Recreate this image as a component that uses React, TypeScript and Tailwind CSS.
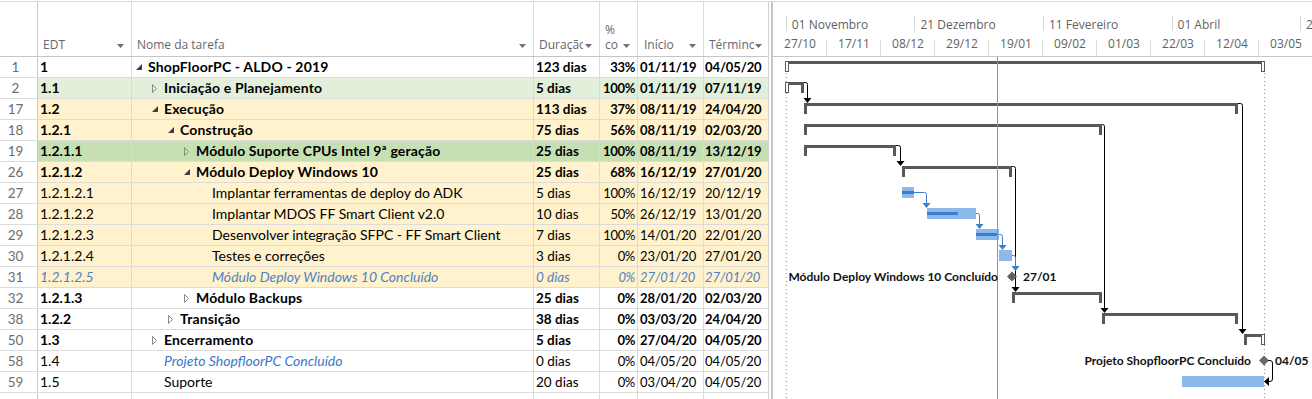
import React from 'react';

const BASE = Date.UTC(2019, 9, 27);
const PX_DAY = 54 / 21;

function dayOf(s: string) {
  const [d, m, y] = s.split('/').map(Number);
  return (Date.UTC(2000 + y, m - 1, d) - BASE) / 86400000;
}
const xs = (s: string) => dayOf(s) * PX_DAY;
const xe = (s: string) => (dayOf(s) + 1) * PX_DAY;
const top = (i: number) => i * 21;

type Kind = 'sum' | 'task' | 'ms';

interface Row {
  n: number;
  edt: string;
  name: string;
  level: number;
  exp?: 'open' | 'closed';
  dur: string;
  pct: string;
  start: string;
  end: string;
  bg: string;
  bold?: boolean;
  italic?: 'all' | 'name';
  kind: Kind;
  progress?: number;
}

const WHITE = 'bg-white';
const LIGHT_GREEN = 'bg-[#e2efda]';
const GREEN = 'bg-[#c6e0b4]';
const YELLOW = 'bg-[#fff2cc]';

const rows: Row[] = [
  { n: 1, edt: '1', name: 'ShopFloorPC - ALDO - 2019', level: 1, exp: 'open', dur: '123 dias', pct: '33%', start: '01/11/19', end: '04/05/20', bg: WHITE, bold: true, kind: 'sum' },
  { n: 2, edt: '1.1', name: 'Iniciação e Planejamento', level: 2, exp: 'closed', dur: '5 dias', pct: '100%', start: '01/11/19', end: '07/11/19', bg: LIGHT_GREEN, bold: true, kind: 'sum' },
  { n: 17, edt: '1.2', name: 'Execução', level: 2, exp: 'open', dur: '113 dias', pct: '37%', start: '08/11/19', end: '24/04/20', bg: YELLOW, bold: true, kind: 'sum' },
  { n: 18, edt: '1.2.1', name: 'Construção', level: 3, exp: 'open', dur: '75 dias', pct: '56%', start: '08/11/19', end: '02/03/20', bg: YELLOW, bold: true, kind: 'sum' },
  { n: 19, edt: '1.2.1.1', name: 'Módulo Suporte CPUs Intel 9ª geração', level: 4, exp: 'closed', dur: '25 dias', pct: '100%', start: '08/11/19', end: '13/12/19', bg: GREEN, bold: true, kind: 'sum' },
  { n: 26, edt: '1.2.1.2', name: 'Módulo Deploy Windows 10', level: 4, exp: 'open', dur: '25 dias', pct: '68%', start: '16/12/19', end: '27/01/20', bg: YELLOW, bold: true, kind: 'sum' },
  { n: 27, edt: '1.2.1.2.1', name: 'Implantar ferramentas de deploy do ADK', level: 5, dur: '5 dias', pct: '100%', start: '16/12/19', end: '20/12/19', bg: YELLOW, kind: 'task', progress: 1 },
  { n: 28, edt: '1.2.1.2.2', name: 'Implantar MDOS FF Smart Client v2.0', level: 5, dur: '10 dias', pct: '50%', start: '26/12/19', end: '13/01/20', bg: YELLOW, kind: 'task', progress: 0.63 },
  { n: 29, edt: '1.2.1.2.3', name: 'Desenvolver integração SFPC - FF Smart Client', level: 5, dur: '7 dias', pct: '100%', start: '14/01/20', end: '22/01/20', bg: YELLOW, kind: 'task', progress: 0.92 },
  { n: 30, edt: '1.2.1.2.4', name: 'Testes e correções', level: 5, dur: '3 dias', pct: '0%', start: '23/01/20', end: '27/01/20', bg: YELLOW, kind: 'task', progress: 0 },
  { n: 31, edt: '1.2.1.2.5', name: 'Módulo Deploy Windows 10 Concluído', level: 5, dur: '0 dias', pct: '0%', start: '27/01/20', end: '27/01/20', bg: YELLOW, italic: 'all', kind: 'ms' },
  { n: 32, edt: '1.2.1.3', name: 'Módulo Backups', level: 4, exp: 'closed', dur: '25 dias', pct: '0%', start: '28/01/20', end: '02/03/20', bg: WHITE, bold: true, kind: 'sum' },
  { n: 38, edt: '1.2.2', name: 'Transição', level: 3, exp: 'closed', dur: '38 dias', pct: '0%', start: '03/03/20', end: '24/04/20', bg: WHITE, bold: true, kind: 'sum' },
  { n: 50, edt: '1.3', name: 'Encerramento', level: 2, exp: 'closed', dur: '5 dias', pct: '0%', start: '27/04/20', end: '04/05/20', bg: WHITE, bold: true, kind: 'sum' },
  { n: 58, edt: '1.4', name: 'Projeto ShopfloorPC Concluído', level: 2, dur: '0 dias', pct: '0%', start: '04/05/20', end: '04/05/20', bg: WHITE, italic: 'name', kind: 'ms' },
  { n: 59, edt: '1.5', name: 'Suporte', level: 2, dur: '20 dias', pct: '0%', start: '03/04/20', end: '04/05/20', bg: WHITE, kind: 'task', progress: 0 },
];

// padding of the name cell, by level (with / without expander)
const INDENT_EXP: Record<number, string> = { 1: 'pl-[4px]', 2: 'pl-[20px]', 3: 'pl-[36px]', 4: 'pl-[52px]' };
const INDENT_LEAF: Record<number, string> = { 2: 'pl-[32px]', 5: 'pl-[80px]' };

const FONT = { fontFamily: 'Lato, "Liberation Sans", sans-serif' };
const UI_FONT = { fontFamily: '"Open Sans", "Liberation Sans", sans-serif' };

function DropArrow() {
  return (
    <svg width="7" height="4" viewBox="0 0 7 4" className="shrink-0">
      <path d="M0 0 H7 L3.5 4 Z" fill="#707070" />
    </svg>
  );
}

function Expander({ kind }: { kind: 'open' | 'closed' }) {
  return (
    <span className="flex w-[12px] shrink-0 items-center">
      {kind === 'open' ? (
        <svg width="6" height="6" viewBox="0 0 6 6">
          <path d="M6 0 V6 H0 Z" fill="#3f3f3f" />
        </svg>
      ) : (
        <svg width="5" height="9" viewBox="0 0 5 9">
          <path d="M0.5 0.5 L4.5 4.5 L0.5 8.5 Z" fill="none" stroke="#8a8a8a" strokeWidth="1" />
        </svg>
      )}
    </span>
  );
}

function HeaderCell({ w, children, arrow = true, last = false }: { w: string; children?: React.ReactNode; arrow?: boolean; last?: boolean }) {
  return (
    <div className={`${w} flex h-full shrink-0 items-end justify-between pb-[3px] pr-[7px] ${last ? '' : 'border-r border-[#dadada]'}`}>
      <div className="min-w-0 flex-1 overflow-hidden pl-[5px] leading-4 text-[#666666]">{children}</div>
      {arrow && (
        <div className="mb-[5px] pl-px">
          <DropArrow />
        </div>
      )}
    </div>
  );
}

function TaskTable() {
  const colBorder = 'border-r border-[#dadada]';
  return (
    <div className="flex w-[769px] shrink-0 flex-col border-r border-[#d0d0d0]">
      <div className="flex h-[55px] border-b border-[#c6c6c6] text-[12px]" style={UI_FONT}>
        <div className="h-full w-[38px] shrink-0 border-r border-[#c8c8c8]" />
        <HeaderCell w="w-[94px]">EDT</HeaderCell>
        <HeaderCell w="w-[402px]">Nome da tarefa</HeaderCell>
        <HeaderCell w="w-[66px]">
          <span className="block w-[44px] overflow-hidden whitespace-nowrap">Duração</span>
        </HeaderCell>
        <HeaderCell w="w-[38px]">
          <span className="block h-[31px] w-[18px] overflow-hidden break-all leading-[15px]">% concluída</span>
        </HeaderCell>
        <HeaderCell w="w-[66px]">
          <span className="pl-px">Início</span>
        </HeaderCell>
        <HeaderCell w="w-[65px]" last>
          <span className="block w-[46px] overflow-hidden whitespace-nowrap">Término</span>
        </HeaderCell>
      </div>

      <div className="flex flex-1 flex-col text-[14px]" style={FONT}>
        {rows.map((r) => {
          const allItalic = r.italic === 'all';
          const txt = allItalic ? 'italic text-[#4f81c4]' : r.bold ? 'font-bold text-black' : 'text-black';
          const nameTxt = r.italic === 'name' ? 'italic text-[#3a78c6]' : txt;
          return (
            <div key={r.n} className="flex h-[21px] shrink-0 border-b border-[#dcdcdc] leading-[20px]">
              <div className="flex w-[38px] shrink-0 justify-center border-r border-[#c8c8c8] bg-white pr-[6px] text-[13.5px] text-[#6e6e6e]">
                {r.n}
              </div>
              <div className={`flex flex-1 ${r.bg}`}>
                <div className={`w-[94px] shrink-0 truncate pl-[2px] ${colBorder} ${txt}`}>{r.edt}</div>
                <div className={`flex w-[402px] shrink-0 items-center overflow-hidden whitespace-nowrap ${colBorder} ${r.exp ? INDENT_EXP[r.level] : INDENT_LEAF[r.level]} ${nameTxt}`}>
                  {r.exp && <Expander kind={r.exp} />}
                  <span className={r.bold ? 'tracking-[0.15px]' : ''}>{r.name}</span>
                </div>
                <div className={`w-[66px] shrink-0 truncate pl-[2px] text-[13.5px] ${colBorder} ${txt}`}>{r.dur}</div>
                <div className={`w-[38px] shrink-0 whitespace-nowrap pr-[2px] text-right text-[13px] tracking-[-0.3px] ${colBorder} ${txt}`}>{r.pct}</div>
                <div className={`w-[66px] shrink-0 whitespace-nowrap pl-[2px] text-[13px] tracking-[-0.1px] ${colBorder} ${txt}`}>{r.start}</div>
                <div className={`w-[64px] shrink-0 whitespace-nowrap pl-px text-[13px] tracking-[-0.1px] ${txt}`}>{r.end}</div>
              </div>
            </div>
          );
        })}
        <div className="flex flex-1">
          <div className="w-[38px] shrink-0 border-r border-[#c8c8c8]" />
          <div className={`w-[94px] shrink-0 ${colBorder}`} />
          <div className={`w-[402px] shrink-0 ${colBorder}`} />
          <div className={`w-[66px] shrink-0 ${colBorder}`} />
          <div className={`w-[38px] shrink-0 ${colBorder}`} />
          <div className={`w-[66px] shrink-0 ${colBorder}`} />
        </div>
      </div>
    </div>
  );
}

const TOP_TIER = ['01 Novembro', '21 Dezembro', '11 Fevereiro', '01 Abril', '21 Maio'];
const BOTTOM_TIER = ['27/10', '17/11', '08/12', '29/12', '19/01', '09/02', '01/03', '22/03', '12/04', '03/05'];

function Timescale() {
  return (
    <div className="h-[55px] overflow-hidden border-b border-[#c6c6c6] text-[12px] text-[#626262]" style={UI_FONT}>
      <div className="mt-[14px] flex h-[15px] whitespace-nowrap">
        <div className="w-[12.857px] shrink-0" />
        {TOP_TIER.map((t) => (
          <div key={t} className="w-[128.571px] shrink-0 border-l border-[#d6d6d6] pl-[5px] leading-[18px]">
            {t}
          </div>
        ))}
      </div>
      <div className="mt-[5px] flex h-[20px]">
        {BOTTOM_TIER.map((t) => (
          <div
            key={t}
            className="relative w-[54px] shrink-0 text-center leading-4 after:absolute after:bottom-0 after:right-0 after:top-[4px] after:w-px after:bg-[#dadada]"
          >
            {t}
          </div>
        ))}
      </div>
    </div>
  );
}

const SUM = '#595959';
const BAR = '#8db8ea';
const PROG = '#3b7dd0';

function SummaryBar({ i, x1, x2, hollowL, hollowR }: { i: number; x1: number; x2: number; hollowL?: boolean; hollowR?: boolean }) {
  const y = top(i) + 4;
  return (
    <g>
      <rect x={x1} y={y} width={x2 - x1} height={3} fill={SUM} />
      {hollowL ? (
        <rect x={x1 - 0.5} y={y + 0.5} width={3} height={10} fill="#fff" stroke={SUM} strokeWidth={1} />
      ) : (
        <rect x={x1} y={y} width={3} height={11} fill={SUM} />
      )}
      {hollowR ? (
        <rect x={x2 - 2.5} y={y + 0.5} width={3} height={10} fill="#fff" stroke={SUM} strokeWidth={1} />
      ) : (
        <rect x={x2 - 3} y={y} width={3} height={11} fill={SUM} />
      )}
    </g>
  );
}

function TaskBar({ i, x1, x2, progress }: { i: number; x1: number; x2: number; progress: number }) {
  const y = top(i) + 4;
  return (
    <g>
      <rect x={x1} y={y} width={x2 - x1} height={11} fill={BAR} />
      {progress > 0 && <rect x={x1} y={y + 4} width={(x2 - x1) * progress} height={3} fill={PROG} />}
    </g>
  );
}

function Diamond({ i, x, color }: { i: number; x: number; color: string }) {
  const cy = top(i) + 9.5;
  return <path d={`M${x} ${cy - 5} L${x + 5} ${cy} L${x} ${cy + 5} L${x - 5} ${cy} Z`} fill={color} />;
}

// link: leaves the end of a bar, turns down and points at the next bar
function DownLink({ from, x, ax, to, color = '#000', fromY }: { from: number; x: number; ax: number; to: number; color?: string; fromY?: number }) {
  const y1 = fromY ?? top(from) + 4.5;
  const y2 = top(to) - 1;
  return (
    <g>
      <path d={`M${x} ${y1} H${ax - 2} Q${ax} ${y1} ${ax} ${y1 + 2} V${y2}`} fill="none" stroke={color} strokeWidth={1} />
      <path d={`M${ax - 4} ${y2} H${ax + 4} L${ax} ${y2 + 5} Z`} fill={color} />
    </g>
  );
}

function GanttBody() {
  const P0 = xs('01/11/19');
  const PEND = xe('04/05/20');
  return (
    <svg width="539" height="342" className="block" style={FONT}>
      {/* project start / finish */}
      <line x1={P0 + 0.5} y1={16} x2={P0 + 0.5} y2={342} stroke="#8a8a8a" strokeDasharray="1 3" />
      <line x1={PEND + 0.5} y1={16} x2={PEND + 0.5} y2={342} stroke="#8a8a8a" strokeDasharray="1 3" />

      {rows.map((r, i) => {
        if (r.kind === 'sum') {
          const x1 = xs(r.start);
          const x2 = xe(r.end);
          return (
            <SummaryBar
              key={r.n}
              i={i}
              x1={Math.round(x1)}
              x2={Math.round(x2)}
              hollowL={Math.abs(x1 - P0) < 1}
              hollowR={Math.abs(x2 - PEND) < 1}
            />
          );
        }
        if (r.kind === 'task') {
          return <TaskBar key={r.n} i={i} x1={Math.round(xs(r.start))} x2={Math.round(xe(r.end))} progress={r.progress ?? 0} />;
        }
        return null;
      })}

      {/* status date */}
      <rect x={224} y={0} width={1} height={342} fill="#6cb650" />

      {/* summary links */}
      <DownLink from={1} x={Math.round(xe('07/11/19'))} ax={34.5} to={2} />
      <DownLink from={4} x={Math.round(xe('13/12/19'))} ax={127.5} to={5} />
      <DownLink from={5} x={Math.round(xe('27/01/20'))} ax={242.5} to={11} />
      <DownLink from={3} x={Math.round(xe('02/03/20'))} ax={331.5} to={12} />
      <DownLink from={2} x={Math.round(xe('24/04/20'))} ax={469.5} to={13} />

      {/* task links */}
      <DownLink from={6} fromY={top(6) + 9.5} x={Math.round(xe('20/12/19'))} ax={153.5} to={7} color={PROG} />
      <DownLink from={7} fromY={top(7) + 9.5} x={Math.round(xe('13/01/20'))} ax={206.5} to={8} color={PROG} />
      <DownLink from={8} fromY={top(8) + 9.5} x={Math.round(xe('22/01/20'))} ax={229.5} to={9} color={PROG} />
      <DownLink from={9} fromY={top(9) + 9.5} x={Math.round(xe('27/01/20'))} ax={242.5} to={10} color={PROG} />

      {/* milestone 31 */}
      <Diamond i={10} x={239} color="#5f5f5f" />
      <text x={225} y={top(10) + 14} textAnchor="end" fontSize={12} fontWeight={700} fill="#111">
        Módulo Deploy Windows 10 Concluído
      </text>
      <text x={250} y={top(10) + 14} fontSize={12} fontWeight={700} fill="#111">
        27/01
      </text>

      {/* milestone 58 */}
      <Diamond i={14} x={491} color="#6a6a6a" />
      <text x={478} y={top(14) + 14} textAnchor="end" fontSize={12} fontWeight={700} fill="#111">
        Projeto ShopfloorPC Concluído
      </text>
      <text x={502} y={top(14) + 14} fontSize={12} fontWeight={700} fill="#111">
        04/05
      </text>
      <path
        d={`M495 ${top(14) + 9.5} H497 Q499.5 ${top(14) + 9.5} 499.5 ${top(14) + 12} V${top(15) + 7} Q499.5 ${top(15) + 9.5} 497 ${top(15) + 9.5} H495`}
        fill="none"
        stroke="#000"
      />
      <path d={`M491 ${top(15) + 9.5} L496 ${top(15) + 5} V${top(15) + 14} Z`} fill="#000" />
    </svg>
  );
}

export default function App() {
  return (
    <div className="h-[399px] w-[1312px] overflow-hidden bg-white">
      <div className="mt-px flex h-[398px] border-t border-[#d9d9d9]">
        <TaskTable />
        <div className="w-[2px] shrink-0" />
        <div className="flex min-w-0 flex-1 flex-col border-l-2 border-[#c6c6c6]">
          <Timescale />
          <GanttBody />
        </div>
      </div>
    </div>
  );
}
